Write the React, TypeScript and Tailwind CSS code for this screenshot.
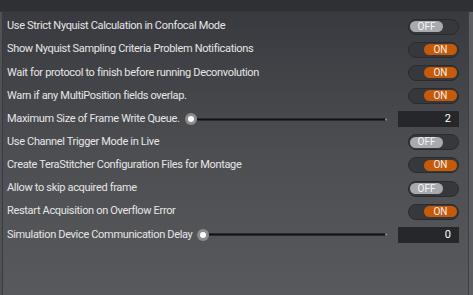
import React from "react";

type Row =
  | { kind: "toggle"; label: string; on: boolean }
  | { kind: "slider"; label: string; value: string };

const rows: Row[] = [
  { kind: "toggle", label: "Use Strict Nyquist Calculation in Confocal Mode", on: false },
  { kind: "toggle", label: "Show Nyquist Sampling Criteria Problem Notifications", on: true },
  { kind: "toggle", label: "Wait for protocol to finish before running Deconvolution", on: true },
  { kind: "toggle", label: "Warn if any MultiPosition fields overlap.", on: true },
  { kind: "slider", label: "Maximum Size of Frame Write Queue.", value: "2" },
  { kind: "toggle", label: "Use Channel Trigger Mode in Live", on: false },
  { kind: "toggle", label: "Create TeraStitcher Configuration Files for Montage", on: true },
  { kind: "toggle", label: "Allow to skip acquired frame", on: false },
  { kind: "toggle", label: "Restart Acquisition on Overflow Error", on: true },
  { kind: "slider", label: "Simulation Device Communication Delay", value: "0" },
];

function Toggle({ on }: { on: boolean }) {
  return (
    <div className="w-[51px] h-[16px] rounded-full bg-[#37383c] border border-[#2a2b2e] flex items-center px-[1px]">
      {on ? (
        <div className="ml-auto w-[33px] h-[11px] rounded-full bg-[#c65a0b] flex items-center justify-center text-[10px] leading-none text-[#f2f2f2]">
          ON
        </div>
      ) : (
        <div className="w-[33px] h-[11px] rounded-full bg-[#a9aaad] flex items-center justify-center text-[10px] leading-none text-[#f4f4f4]">
          OFF
        </div>
      )}
    </div>
  );
}

function Slider({ value }: { value: string }) {
  return (
    <div className="flex-1 flex items-center">
      <div className="flex-1 flex items-center ml-[5px] mr-[11px]">
        <div className="w-[12px] h-[12px] rounded-full bg-[#8a8b8e] flex items-center justify-center shrink-0">
          <div className="w-[6px] h-[6px] rounded-full bg-white" />
        </div>
        <div className="flex-1 h-[3px] bg-[#111214] border-y border-[#2a2b2d] border-r-2 border-r-[#8a8b8e]" />
      </div>
      <div className="w-[61px] h-[16px] bg-[#26272b] flex items-center justify-end pr-[8px] text-[11px] text-white">
        {value}
      </div>
    </div>
  );
}

export default function App() {
  return (
    <div
      className="w-[473px] h-[295px] flex flex-col bg-[#2f3034] overflow-hidden"
      style={{ fontFamily: "Roboto, 'Open Sans', sans-serif" }}
    >
      <div className="h-[12px] shrink-0 bg-[#2f3034] border-b border-[#35363a]" />
      <div className="flex-1 flex bg-gradient-to-b from-[#393a3f] via-[#4d4e52] to-[#58595d]">
        <div className="w-[2px] shrink-0 bg-[#505155]" />
        <div className="w-[1px] shrink-0 bg-[#3a3b3f]" />
        <div className="flex-1 flex flex-col pt-[3px]">
          {rows.map((r, i) => (
            <div key={i} className="h-[23.15px] flex items-center pl-[4px] pr-[9px]">
              <span className="text-[11px] text-[#e6e6e6] whitespace-nowrap tracking-[-0.33px]">{r.label}</span>
              {r.kind === "toggle" ? (
                <>
                  <div className="flex-1" />
                  <Toggle on={r.on} />
                </>
              ) : (
                <Slider value={r.value} />
              )}
            </div>
          ))}
        </div>
        <div className="w-[1px] shrink-0 bg-[#3e3f43]" />
        <div className="w-[4px] shrink-0 bg-[#5d5e62]" />
      </div>
    </div>
  );
}
